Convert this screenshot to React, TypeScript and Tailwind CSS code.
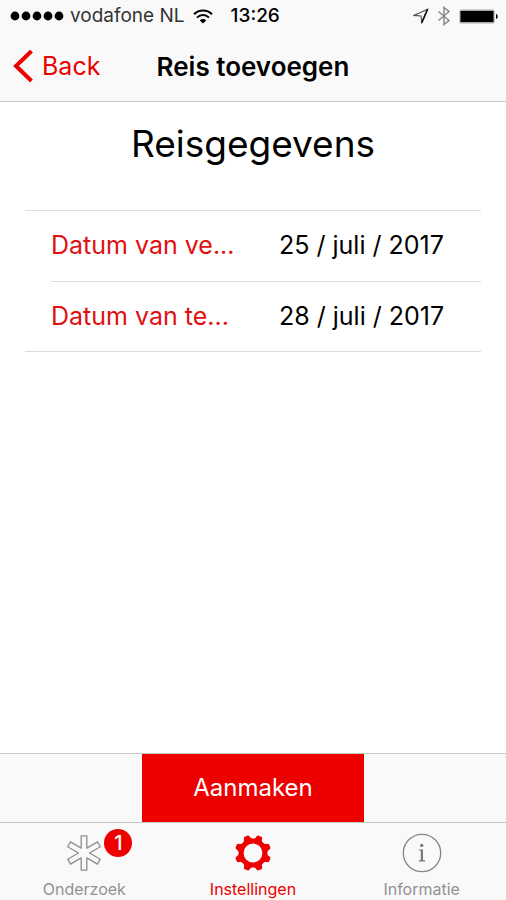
import React from 'react'

const dates = [
  { id: 'departure', label: 'Datum van ve...', value: '25 / juli / 2017' },
  { id: 'return', label: 'Datum van te...', value: '28 / juli / 2017' },
]

const teeth = [22.5, 67.5, 112.5, 157.5, 202.5, 247.5, 292.5, 337.5]

function StatusBar() {
  return (
    <div className="flex h-8 items-center pl-[10px] pr-2 text-black">
      <svg width="54" height="10" viewBox="0 0 54 10" aria-hidden="true">
        <circle cx="5" cy="5" r="4.4" />
        <circle cx="16" cy="5" r="4.4" />
        <circle cx="27" cy="5" r="4.4" />
        <circle cx="38" cy="5" r="4.4" />
        <circle cx="49" cy="5" r="4.4" />
      </svg>
      <span className="ml-[6px] text-[19px] text-[#333]">vodafone NL</span>
      <svg className="ml-2" width="20" height="15" viewBox="0 0 20 15" fill="none" stroke="#000" strokeWidth="2" aria-hidden="true">
        <path d="M1 5.2a12.8 12.8 0 0 1 18 0" />
        <path d="M4 8.6a8.5 8.5 0 0 1 12 0" />
        <path d="M6.8 11.4a4.6 4.6 0 0 1 6.4 0L10 14.6z" fill="#000" stroke="none" />
      </svg>
      <span className="ml-[18px] text-[19px] font-medium">13:26</span>
      <div className="ml-auto flex items-center">
        <svg width="16" height="16" viewBox="0 0 16 16" fill="none" stroke="#555" strokeWidth="1.2" aria-hidden="true">
          <path d="M14.6 1.2 1 7.4l7 .6.8 6.6z" />
          <path d="M14.6 1.2 8.8 14.6" stroke="#111" strokeWidth="1.6" />
        </svg>
        <svg className="ml-2" width="14" height="20" viewBox="0 0 14 20" fill="none" stroke="#8a8a8a" strokeWidth="1.5" aria-hidden="true">
          <path d="m1.5 5.5 10.5 9L7 18.6V1.4l5 4.1-10.5 9" />
        </svg>
        <svg className="ml-2" width="39" height="15" viewBox="0 0 39 15" aria-hidden="true">
          <rect x=".5" y=".5" width="35" height="14" rx="1.5" fill="#aaa" />
          <rect x="1.5" y="2" width="33" height="11" fill="#000" />
          <path d="M37 5c2.3.4 2.3 4.6 0 5z" />
        </svg>
      </div>
    </div>
  )
}

function AsteriskIcon() {
  return (
    <svg width="40" height="40" viewBox="-20 -20 40 40" fill="none" stroke="#8e8e8e" strokeWidth="1.3" strokeLinejoin="round" aria-hidden="true">
      <path d="M-2.8-17.2H2.8V-4.85L13.5-11.1 16.3-6.2 5.6 0 16.3 6.2 13.5 11.1 2.8 4.85V17.2H-2.8V4.85L-13.5 11.1-16.3 6.2-5.6 0-16.3-6.2-13.5-11.1-2.8-4.85Z" />
    </svg>
  )
}

function GearIcon() {
  return (
    <svg width="40" height="40" viewBox="-20 -20 40 40" aria-hidden="true">
      <circle r="11.9" fill="none" stroke="#ec0000" strokeWidth="5" />
      {teeth.map((angle) => (
        <path
          key={angle}
          d="M-5.8-12.5Q-3.3-14-3.1-16.2Q-2.9-18-1.4-18.2H1.4Q2.9-18 3.1-16.2Q3.3-14 5.8-12.5Z"
          fill="#ec0000"
          transform={`rotate(${angle})`}
        />
      ))}
    </svg>
  )
}

function InfoIcon() {
  return (
    <svg width="40" height="40" viewBox="-20 -20 40 40" aria-hidden="true">
      <circle r="18.7" fill="none" stroke="#858585" strokeWidth="1.3" />
      <circle cx="-.3" cy="-7.6" r="1.7" fill="#777" />
      <path d="M-3.2-3.6H1V7.2H3V8.6H-3.2V7.2H-1.2V-2.4H-3.2Z" fill="#777" />
    </svg>
  )
}

const tabs = [
  { label: 'Onderzoek', icon: <AsteriskIcon />, active: false, badge: 1 },
  { label: 'Instellingen', icon: <GearIcon />, active: true, badge: 0 },
  { label: 'Informatie', icon: <InfoIcon />, active: false, badge: 0 },
]

export default function App() {
  return (
    <div className="flex min-h-screen flex-col bg-white font-['Inter','Liberation_Sans',sans-serif] text-black">
      <header className="border-b border-[#c8c8c8] bg-[#f9f9f9]">
        <StatusBar />
        <div className="grid h-[69px] grid-cols-[1fr_auto_1fr] items-center px-3">
          <button type="button" className="flex items-center gap-2 justify-self-start text-[25px] text-[#ec0000]">
            <svg width="22" height="34" viewBox="0 0 22 34" fill="none" stroke="currentColor" strokeWidth="4" aria-hidden="true">
              <path d="M19.5 1 4 16l15.5 15" />
            </svg>
            Back
          </button>
          <h1 className="text-[26px] font-semibold">Reis toevoegen</h1>
        </div>
      </header>

      <main className="flex-1 px-[25px]">
        <h2 className="pt-[18px] text-center text-[37px] leading-12">Reisgegevens</h2>

        <form className="mt-[42px] border-y border-[#dcdcdc] text-[25px]">
          {dates.map((date, index) => (
            <div
              key={date.id}
              className={`ml-[26px] flex h-[70px] items-center ${index > 0 ? 'border-t border-[#dcdcdc]' : ''}`}
            >
              <label htmlFor={date.id} className="w-[228px] shrink-0 text-[#e01010]">
                {date.label}
              </label>
              <input id={date.id} type="text" readOnly defaultValue={date.value} className="min-w-0 flex-1 bg-transparent outline-none" />
            </div>
          ))}
        </form>
      </main>

      <div className="flex justify-center border-y border-[#c8c8c8] bg-[#f9f9f9]">
        <button type="button" className="h-[68px] w-[44%] bg-[#ec0000] text-[24px] text-white">
          Aanmaken
        </button>
      </div>

      <nav className="grid h-[77px] grid-cols-3 bg-[#f9f9f9]">
        {tabs.map((tab) => (
          <a
            key={tab.label}
            href="#"
            className={`flex flex-col items-center pt-[10px] text-[16px] ${tab.active ? 'text-[#ec0000]' : 'text-[#929292]'}`}
          >
            <span className="relative">
              {tab.icon}
              {tab.badge > 0 && (
                <span className="absolute -top-1 left-10 flex size-7 items-center justify-center rounded-full bg-[#ec0000] text-[20px] font-medium text-white">
                  {tab.badge}
                </span>
              )}
            </span>
            <span className="mt-1">{tab.label}</span>
          </a>
        ))}
      </nav>
    </div>
  )
}
